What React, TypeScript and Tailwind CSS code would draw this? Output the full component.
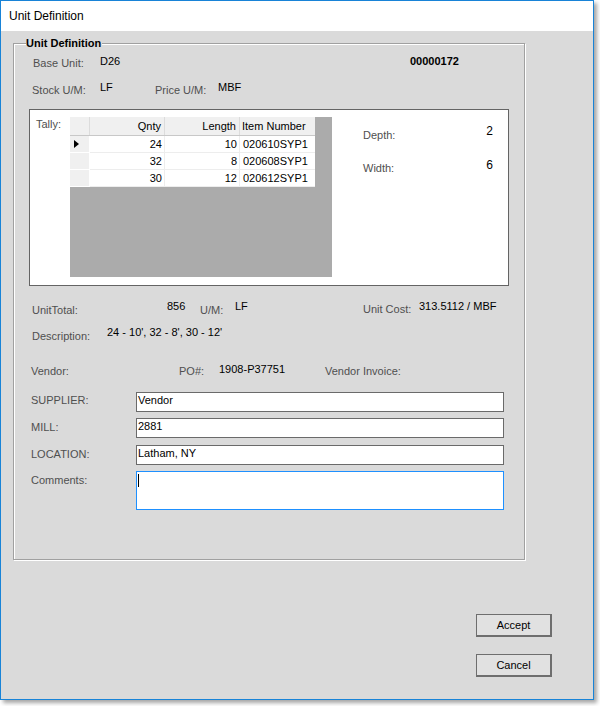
import React from 'react'

const font = { fontFamily: '"Liberation Sans", Arial, sans-serif' }

const rows = [
    { qnty: '24', length: '10', item: '020610SYP1', current: true },
    { qnty: '32', length: '8', item: '020608SYP1', current: false },
    { qnty: '30', length: '12', item: '020612SYP1', current: false },
]

function Label({ children, className = '' }: { children: React.ReactNode; className?: string }) {
    return <div className={`shrink-0 text-[11px] leading-[13px] text-[#4f4f4f] whitespace-nowrap ${className}`}>{children}</div>
}

function Value({ children, className = '' }: { children: React.ReactNode; className?: string }) {
    return <div className={`shrink-0 text-[11px] leading-[13px] text-black whitespace-nowrap ${className}`}>{children}</div>
}

function Field({ label, value, mt, labelMt }: { label: string; value: string; mt: string; labelMt: string }) {
    return (
        <div className={`flex items-start pl-[17px] ${mt}`}>
            <Label className={`w-[105px] ${labelMt}`}>{label}</Label>
            <div className="shrink-0 w-[368px] h-[20px] bg-white border border-[#6a6a6a] px-px pt-px">
                <Value>{value}</Value>
            </div>
        </div>
    )
}

function TallyGrid() {
    return (
        <div className="shrink-0 w-[262px] h-[160px] bg-[#ababab] flex flex-col items-start">
            {/* header */}
            <div className="flex h-[19px] bg-[#f0f0f0] border-b border-[#c8c8c8]">
                <div className="w-[20px] border-r border-[#dcdcdc]" />
                <div className="w-[75px] border-r border-[#dcdcdc] text-right pr-[3px] pt-[3px]">
                    <Value>Qnty</Value>
                </div>
                <div className="w-[75px] border-r border-[#dcdcdc] text-right pr-[3px] pt-[3px]">
                    <Value>Length</Value>
                </div>
                <div className="w-[75px] pl-[2px] pt-[3px]">
                    <Value>Item Number</Value>
                </div>
            </div>
            {rows.map((r) => (
                <div key={r.item} className="flex h-[17px]">
                    <div className="w-[20px] bg-[#f0f0f0] border-r border-b border-white flex items-center pl-[4px]">
                        {r.current && (
                            <svg width="5" height="8" viewBox="0 0 5 8">
                                <path d="M0 0 L5 4 L0 8 Z" fill="#000" />
                            </svg>
                        )}
                    </div>
                    <div className="w-[75px] bg-white border-r border-b border-[#ededed] text-right pr-[2px] pt-[2px]">
                        <Value>{r.qnty}</Value>
                    </div>
                    <div className="w-[75px] bg-white border-r border-b border-[#ededed] text-right pr-[2px] pt-[2px]">
                        <Value>{r.length}</Value>
                    </div>
                    <div className="w-[75px] bg-white border-b border-[#ededed] pl-[3px] pt-[2px]">
                        <Value>{r.item}</Value>
                    </div>
                </div>
            ))}
        </div>
    )
}

export default function App() {
    return (
        <div className="w-[600px] h-[706px] bg-white" style={font}>
            <div className="w-[594px] h-[700px] border border-[#1883d7] flex flex-col shadow-[3px_3px_4px_rgba(0,0,0,0.35)]">
                {/* title bar */}
                <div className="h-[30px] bg-white flex items-center pl-[8px]">
                    <span className="text-[12px] text-black">Unit Definition</span>
                </div>

                {/* body */}
                <div className="flex-1 bg-[#dadada] flex flex-col pl-[12px] pt-[12px]">
                    <div className="relative w-[512px] h-[517px] border border-[#a0a0a0] shadow-[inset_1px_1px_0_#fff,1px_1px_0_#fff] flex flex-col">
                        <div className="absolute left-[12px] -top-[7px] bg-[#dadada] pr-px text-[11px] leading-[13px] font-bold text-black">
                            Unit Definition
                        </div>

                        {/* base unit row */}
                        <div className="flex items-start h-[26px] mt-[11px] pl-[19px]">
                            <Label className="w-[67px] mt-[2px]">Base Unit:</Label>
                            <Value className="w-[310px]">D26</Value>
                            <Value className="font-bold">00000172</Value>
                        </div>

                        {/* stock row */}
                        <div className="flex items-start h-[28px] pl-[18px]">
                            <Label className="w-[68px] mt-[3px]">Stock U/M:</Label>
                            <Value className="w-[55px]">LF</Value>
                            <Label className="w-[63px] mt-[3px]">Price U/M:</Label>
                            <Value>MBF</Value>
                        </div>

                        {/* tally panel */}
                        <div className="ml-[15px] w-[480px] h-[177px] bg-white border border-[#646464] flex items-start pl-[6px] pt-[7px]">
                            <Label className="w-[34px] mt-[1px]">Tally:</Label>
                            <TallyGrid />
                            <div className="shrink-0 ml-[31px] w-[130px] mt-[8px] flex flex-col">
                                <div className="flex justify-between items-start h-[34px]">
                                    <Label className="mt-[4px]">Depth:</Label>
                                    <Value className="text-[12px]">2</Value>
                                </div>
                                <div className="flex justify-between items-start">
                                    <Label className="mt-[3px]">Width:</Label>
                                    <Value className="text-[12px]">6</Value>
                                </div>
                            </div>
                        </div>

                        {/* totals row */}
                        <div className="flex items-start h-[26px] mt-[14px] pl-[18px]">
                            <Label className="w-[135px] mt-[4px]">UnitTotal:</Label>
                            <Value className="w-[33px]">856</Value>
                            <Label className="w-[35px] mt-[4px]">U/M:</Label>
                            <Value className="w-[128px]">LF</Value>
                            <Label className="w-[56px] mt-[3px]">Unit Cost:</Label>
                            <Value>313.5112 / MBF</Value>
                        </div>

                        {/* description row */}
                        <div className="flex items-start h-[37px] pl-[18px]">
                            <Label className="w-[75px] mt-[4px]">Description:</Label>
                            <Value>24 - 10', 32 - 8', 30 - 12'</Value>
                        </div>

                        {/* vendor row */}
                        <div className="flex items-start h-[29px] pl-[17px]">
                            <Label className="w-[148px] mt-[2px]">Vendor:</Label>
                            <Label className="w-[40px] mt-[2px]">PO#:</Label>
                            <Value className="w-[106px]">1908-P37751</Value>
                            <Label className="mt-[2px]">Vendor Invoice:</Label>
                        </div>

                        <Field label="SUPPLIER:" value="Vendor" mt="mt-0" labelMt="mt-[2px]" />
                        <Field label="MILL:" value="2881" mt="mt-[6px]" labelMt="mt-[3px]" />
                        <Field label="LOCATION:" value="Latham, NY" mt="mt-[7px]" labelMt="mt-[3px]" />

                        <div className="flex items-start pl-[17px] mt-[6px]">
                            <Label className="w-[105px] mt-[3px]">Comments:</Label>
                            <div className="shrink-0 w-[368px] h-[39px] bg-white border border-[#1e90ff] pl-[1px] pt-[2px]">
                                <span className="block w-px h-[13px] bg-black" />
                            </div>
                        </div>
                    </div>

                    {/* buttons */}
                    <div className="flex flex-col items-end pr-[41px] mt-[54px] gap-[17px]">
                        <button className="w-[76px] h-[23px] bg-[#e1e1e1] border border-[#6e6e6e] border-r-2 border-b-2 text-[11px] text-black">
                            Accept
                        </button>
                        <button className="w-[76px] h-[23px] bg-[#e1e1e1] border border-[#6e6e6e] border-r-2 border-b-2 text-[11px] text-black">
                            Cancel
                        </button>
                    </div>
                </div>
            </div>
        </div>
    )
}
